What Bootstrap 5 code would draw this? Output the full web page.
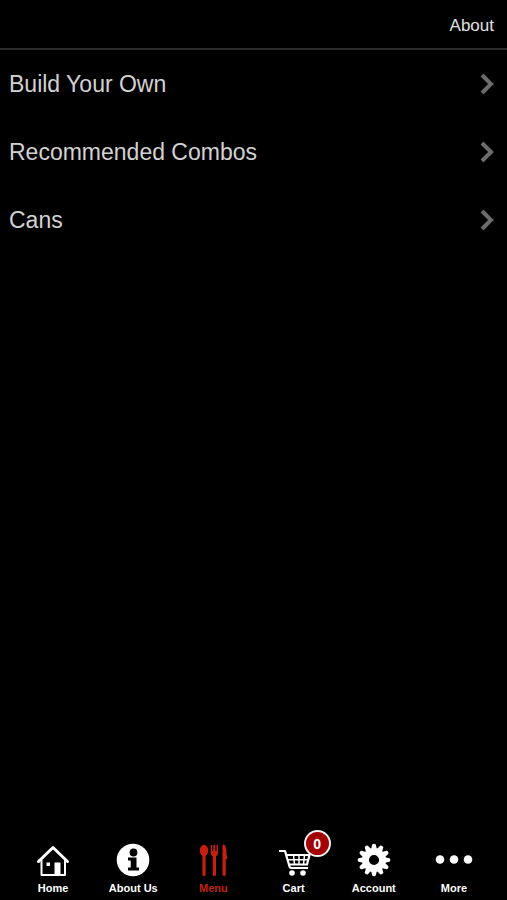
<!DOCTYPE html>
<html lang="en">
<head>
<meta charset="utf-8">
<meta name="viewport" content="width=device-width, initial-scale=1">
<title>Menu</title>
<link href="https://cdn.jsdelivr.net/npm/bootstrap@5.3.0/dist/css/bootstrap.min.css" rel="stylesheet">
<style>
  body { background: #000; font-family: "Liberation Sans", Arial, sans-serif; }
  .top-bar { border-bottom: 2px solid #2c2c2c; height: 50px; padding: 4px 13px 0; }
  .top-link { color: #e0e0e0; font-size: 17px; line-height: 24px; }
  .menu-row { color: #d2d2d2; font-size: 23px; line-height: 28px; padding: 20px 13px 20px 9px; }
  .menu-row:hover { color: #fff; }
  .menu-row svg { width: 14px; height: 22px; }
  .tab-bar { padding: 0 13px 5px; }
  .tab-link { color: #fff; font-size: 11px; font-weight: 700; line-height: 14px; gap: 3px; }
  .tab-link.active { color: #c5200f; }
  .tab-link svg { width: 40px; height: 36px; }
  .cart-count {
    top: -12px; left: 50%; margin-left: 10px; width: 27px; height: 27px;
    border: 2px solid #f2f2f2; background: #a30006; font-size: 14px; line-height: 24px;
  }
</style>
</head>
<body>
<div class="d-flex flex-column min-vh-100">
  <header class="top-bar d-flex align-items-center justify-content-end">
    <a class="top-link text-decoration-none" href="#about">About</a>
  </header>

  <main class="flex-grow-1">
    <nav class="d-flex flex-column" aria-label="Menu sections">
      <a class="menu-row d-flex align-items-center justify-content-between text-decoration-none" href="#build">Build Your Own
        <svg viewBox="0 0 14 22" aria-hidden="true"><path d="M2 2l9 9-9 9" fill="none" stroke="#6c6c6c" stroke-width="4"/></svg></a>
      <a class="menu-row d-flex align-items-center justify-content-between text-decoration-none" href="#combos">Recommended Combos
        <svg viewBox="0 0 14 22" aria-hidden="true"><path d="M2 2l9 9-9 9" fill="none" stroke="#6c6c6c" stroke-width="4"/></svg></a>
      <a class="menu-row d-flex align-items-center justify-content-between text-decoration-none" href="#cans">Cans
        <svg viewBox="0 0 14 22" aria-hidden="true"><path d="M2 2l9 9-9 9" fill="none" stroke="#6c6c6c" stroke-width="4"/></svg></a>
    </nav>
  </main>

  <nav class="tab-bar row g-0" aria-label="Main">
    <a class="tab-link col d-flex flex-column align-items-center text-decoration-none" href="#home">
      <svg viewBox="0 0 40 36" aria-hidden="true"><path d="M5.500 19.500L20 5.500l14.500 14" fill="none" stroke="currentColor" stroke-width="3" stroke-linecap="round" stroke-linejoin="round"/><path d="M8.500 18v15h23.500V18" fill="none" stroke="currentColor" stroke-width="2" stroke-linejoin="round"/><path d="M13.500 20.500h3.500V24h-3.500zM21.500 20.500h6V33h-6z" fill="currentColor"/></svg>
      Home</a>
    <a class="tab-link col d-flex flex-column align-items-center text-decoration-none" href="#about-us">
      <svg viewBox="0 0 40 36" aria-hidden="true"><circle cx="20" cy="18" r="16.300" fill="currentColor"/><circle cx="20.500" cy="10.500" r="3.900" fill="#000"/><path d="M15 15.500h8.500v10H26V28.500H15v-3h2.700v-7H15z" fill="#000"/></svg>
      About Us</a>
    <a class="tab-link active col d-flex flex-column align-items-center text-decoration-none" href="#menu" aria-current="page">
      <svg viewBox="0 0 40 36" aria-hidden="true"><g fill="currentColor"><ellipse cx="11" cy="8.500" rx="4.200" ry="5.800"/><rect x="9.400" y="12" width="3.200" height="22" rx="1.500"/><path d="M17.700 3h1.400v6h1.200V3h2v6h1.200V3H25v7.500q0 3-2 4V32.500q0 1.500-1.600 1.500t-1.600-1.500v-18q-2.100-1-2.100-4z"/><path d="M29.500 4q0-2 1.500-1.500 2.500 1 2.500 9.500l.8 3.500q0 1.500-1.500 1.800v15.200q0 1.500-1.600 1.500t-1.700-1.500z"/></g></svg>
      Menu</a>
    <a class="tab-link col d-flex flex-column align-items-center text-decoration-none position-relative" href="#cart">
      <svg viewBox="0 0 40 36" aria-hidden="true"><g fill="none" stroke="currentColor" stroke-width="2.200"><path d="M5 9h6l4.500 15.500q.4 1.500 2 1.500H34" stroke-linejoin="round"/><path d="M12 13h23.500l-2.500 9.500H15"/><path d="M13.500 17.700h20.500M19.500 13l1 9.500M25 13v9.500M30.500 13l-1 9.500" stroke-width="1.500"/></g><circle cx="18" cy="31" r="2.800" fill="currentColor"/><circle cx="29" cy="31" r="2.800" fill="currentColor"/></svg>
      Cart
      <span class="cart-count position-absolute rounded-circle text-center text-white">0</span></a>
    <a class="tab-link col d-flex flex-column align-items-center text-decoration-none" href="#account">
      <svg viewBox="0 0 40 36" aria-hidden="true"><circle cx="20" cy="18" r="8.500" fill="none" stroke="currentColor" stroke-width="6.800"/>
        <g fill="currentColor">
          <g id="teeth"><path id="tooth" d="M16.900 8l1.300-5.300q.3-1 1.800-1t1.800 1L23.100 8z"/><use href="#tooth" transform="rotate(30 20 18)"/><use href="#tooth" transform="rotate(60 20 18)"/></g>
          <use href="#teeth" transform="rotate(90 20 18)"/><use href="#teeth" transform="rotate(180 20 18)"/><use href="#teeth" transform="rotate(270 20 18)"/>
        </g></svg>
      Account</a>
    <a class="tab-link col d-flex flex-column align-items-center text-decoration-none" href="#more">
      <svg viewBox="0 0 40 36" aria-hidden="true"><g fill="currentColor"><circle cx="6" cy="17.500" r="4.300"/><circle cx="20" cy="17.500" r="4.300"/><circle cx="34" cy="17.500" r="4.300"/></g></svg>
      More</a>
  </nav>
</div>
<script src="https://cdn.jsdelivr.net/npm/bootstrap@5.3.0/dist/js/bootstrap.bundle.min.js"></script>
</body>
</html>
